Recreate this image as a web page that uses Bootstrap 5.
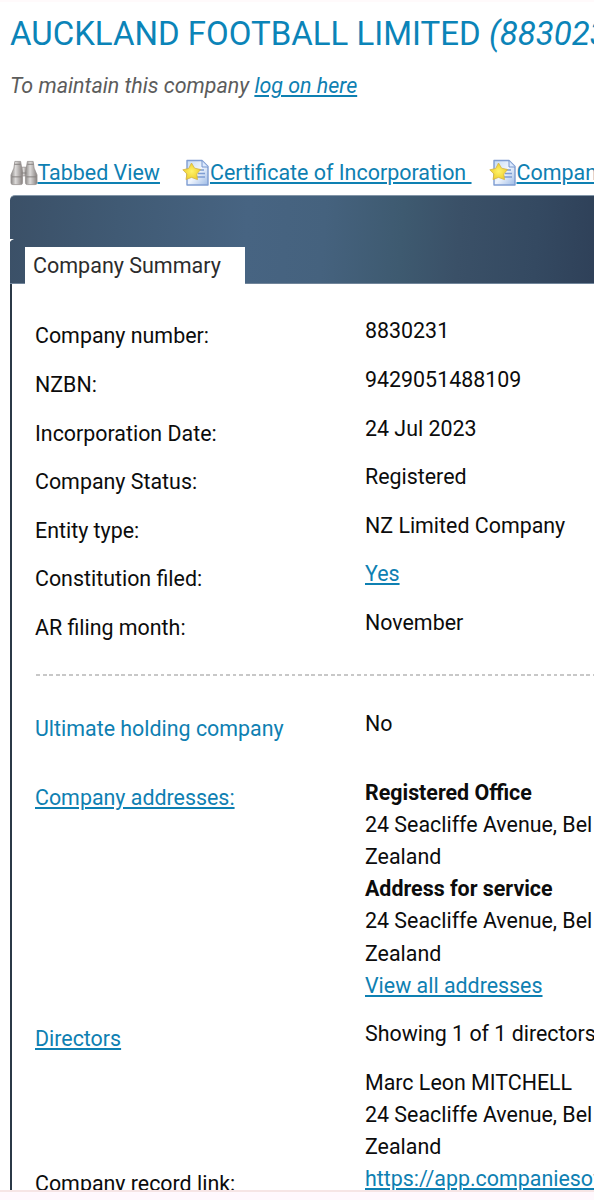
<!DOCTYPE html>
<html lang="en">
<head>
<meta charset="utf-8">
<meta name="viewport" content="width=device-width, initial-scale=1">
<title>Auckland Football Limited</title>
<link href="https://cdn.jsdelivr.net/npm/bootstrap@5.3.0/dist/css/bootstrap.min.css" rel="stylesheet">
<style>
body{font-family:Roboto,"Liberation Sans",sans-serif;font-size:21.4px;line-height:32.2px;color:#0c0c0c;background:#fff;height:1200px;overflow:hidden}
a{color:#0e80b2;text-decoration:underline;text-decoration-thickness:1.5px;text-underline-offset:2px}
.screen{height:1190px;border-top:2px solid #fffafb}
.footer-strip{height:10px;background:#fff8fd;border-top:2px solid #f6e5e5}
.company-title{font-size:33px;line-height:40px;color:#0b84b8;font-weight:400;margin:12px 0 0 10px}
.login-note{margin:17px 0 0 10px;color:#5c5c5c;line-height:30px;font-size:21.45px}
.doc-links{margin:55px 0 0 9.5px;height:34px;font-size:21.45px}
.doc-links a{padding-top:1px}
.panel-box{margin:5px 0 0 10px;width:640px}
.panel-head{height:88.5px;padding-left:15px;border-top:1px solid #8396a8;border-bottom:1px solid #71859a;border-radius:5px 0 0 0;background:linear-gradient(94deg,#3b5067 0,#405a74 17%,#476482 37%,#45627e 49%,#3e5a70 61%,#3a5067 70%,#344961 82%,#2f4159 91%,#2e3d50 100%);position:relative}
.panel-head::before{content:"";position:absolute;left:0;top:43px;width:4px;height:3px;background:#fff;clip-path:polygon(0 0,100% 0,30% 50%,0 100%)}
.summary-tab{background:#fff;width:220px;height:37px;line-height:37px;padding-left:8px;color:#2c2c2c;margin-bottom:-1px;position:relative;font-size:21.5px}
.panel-main{border-left:2px solid #2b3947;padding:31.9px 0 0 23px;height:960px}
.entry{height:48.6px}
.entry dt{width:330px;font-weight:400;padding-top:5px;flex:none}
.entry dd{margin:0;flex:none}
.entry dd strong{font-weight:700}
.divider{height:2px;margin:18.6px 0 31.5px;background:repeating-linear-gradient(90deg,transparent 0 1.2px,#c8c8c8 1.2px 5px,transparent 5px 6.55px)}
.holding{height:69px}.addresses{height:241.8px}.directors{height:145px}
</style>
</head>
<body>
<svg width="0" height="0" class="position-absolute" aria-hidden="true">
<defs>
<linearGradient id="metal"><stop stop-color="#8b8886"/><stop offset=".4" stop-color="#dcdad9"/><stop offset="1" stop-color="#87817f"/></linearGradient>
<linearGradient id="paper" x2="1" y2="1"><stop stop-color="#c6dcf5"/><stop offset=".5" stop-color="#f0f5fd"/><stop offset="1" stop-color="#9ebbe6"/></linearGradient>
<radialGradient id="gold"><stop stop-color="#fff36a"/><stop offset="1" stop-color="#efd02f"/></radialGradient>
</defs>
<symbol id="certificate" viewBox="0 0 28 28">
<path d="M5 1.5H20L26 7.5V26H5Z" fill="url(#paper)" stroke="#7f9dd2" stroke-width="1.4" stroke-linejoin="round"/>
<path d="M20 2V8H26" fill="#dceaff" stroke="#7796cd"/>
<path d="M16 11H22M16 14.5H23M15 18H23" stroke="#7e9dd3" stroke-width="1.4"/>
<path d="M9.5 4L12.6 9.2 18.6 10.5 14.8 15 15.5 20.6 9.5 18.4 4 20.6 4.9 15 .8 10.8 6.7 9.5Z" fill="url(#gold)" stroke="#d3b347" stroke-width=".8" stroke-linejoin="round"/>
</symbol>
</svg>
<main class="screen overflow-hidden">
<h1 class="company-title text-nowrap">AUCKLAND FOOTBALL LIMITED <em>(8830231)</em></h1>
<p class="login-note fst-italic">To maintain this company <a href="#">log on here</a></p>
<nav class="doc-links d-flex align-items-center text-nowrap" aria-label="Documents">
<svg width="28" height="28" viewBox="0 0 29 28" class="flex-shrink-0" aria-hidden="true">
<g fill="url(#metal)" stroke="#96918f" stroke-width=".8"><path d="M11 8H18V17H11Z"/><path d="M5 2H11L12 8 13 13V24Q13 26 11 26H3Q1 26 1 24V16L4 9Z"/><path d="M18 2H24L25 9 28 16V24Q28 26 26 26H18Q16 26 16 24V13L17 8Z"/></g>
<path d="M4.5 5H11M18 5H24.5M2 18H12M17 18H27M12 14H17" stroke="#858180" stroke-width="1"/>
</svg><a href="#">Tabbed View</a>
<svg width="28" height="28" class="flex-shrink-0" style="margin-left:22px" aria-hidden="true"><use href="#certificate"/></svg><a href="#">Certificate of Incorporation&nbsp;</a>
<svg width="28" height="28" class="flex-shrink-0" style="margin-left:17px" aria-hidden="true"><use href="#certificate"/></svg><a href="#">Company Extract</a>
</nav>
<section class="panel-box">
<header class="panel-head d-flex align-items-end"><div class="summary-tab">Company Summary</div></header>
<dl class="panel-main text-nowrap mb-0">
<div class="entry d-flex"><dt>Company number:</dt><dd>8830231</dd></div>
<div class="entry d-flex"><dt>NZBN:</dt><dd>9429051488109</dd></div>
<div class="entry d-flex"><dt>Incorporation Date:</dt><dd>24 Jul 2023</dd></div>
<div class="entry d-flex"><dt>Company Status:</dt><dd>Registered</dd></div>
<div class="entry d-flex"><dt>Entity type:</dt><dd>NZ Limited Company</dd></div>
<div class="entry d-flex"><dt>Constitution filed:</dt><dd><a href="#">Yes</a></dd></div>
<div class="entry d-flex"><dt>AR filing month:</dt><dd>November</dd></div>
<div class="divider" role="separator"></div>
<div class="entry holding d-flex"><dt style="color:#0e80b2">Ultimate holding company</dt><dd>No</dd></div>
<div class="entry addresses d-flex"><dt><a href="#">Company addresses:</a></dt><dd><strong>Registered Office</strong><br>24 Seacliffe Avenue, Bel<br>Zealand<br><strong>Address for service</strong><br>24 Seacliffe Avenue, Bel<br>Zealand<br><a href="#">View all addresses</a></dd></div>
<div class="entry directors d-flex"><dt><a href="#">Directors</a></dt><dd><div class="mb-3">Showing 1 of 1 directors</div>Marc Leon MITCHELL<br>24 Seacliffe Avenue, Bel<br>Zealand</dd></div>
<div class="entry d-flex"><dt>Company record link:</dt><dd><a href="#">https://app.companiesoffice.govt.nz</a></dd></div>
</dl>
</section>
</main>
<div class="footer-strip"></div>
<script src="https://cdn.jsdelivr.net/npm/bootstrap@5.3.0/dist/js/bootstrap.bundle.min.js"></script>
</body>
</html>
